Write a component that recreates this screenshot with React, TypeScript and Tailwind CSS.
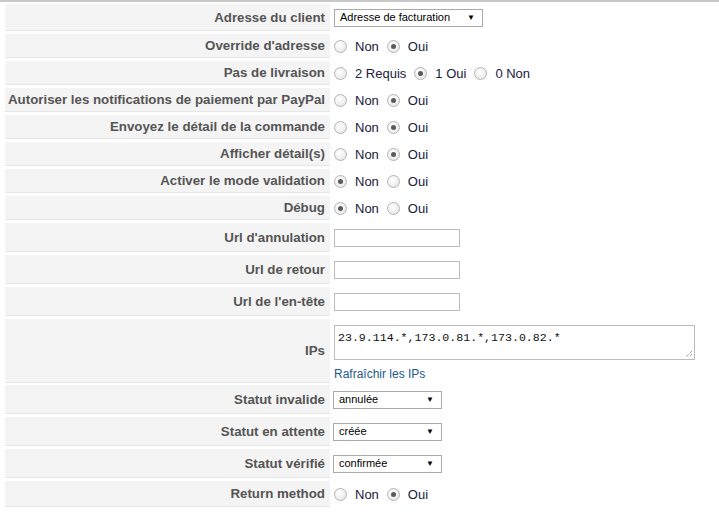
import type { ReactNode } from 'react';

const font = { fontFamily: '"Liberation Sans", Arial, sans-serif' };

function Radio({ checked }: { checked?: boolean }) {
  return (
    <span className="inline-flex h-[13px] w-[13px] shrink-0 items-center justify-center rounded-full border border-[#b4b4b4] bg-[radial-gradient(circle_at_40%_35%,#ffffff,#e2e2e2)]">
      {checked && <span className="h-[5px] w-[5px] rounded-full bg-[#5a5a5a]" />}
    </span>
  );
}

function Radios({ options, value }: { options: string[]; value: number }) {
  return (
    <div className="flex items-center pt-[1px] text-[13px] text-[#20203a]">
      {options.map((o, i) => (
        <span key={o} className="flex items-center pl-[1px] pr-[7px]">
          <Radio checked={i === value} />
          <span className="ml-[8px]">{o}</span>
        </span>
      ))}
    </div>
  );
}

function Select({ value, width }: { value: string; width: string }) {
  return (
    <div
      className={`flex h-[18px] ${width} items-center justify-between border border-[#aaaaaa] bg-white pl-[5px] pr-[7px] text-[11px] text-black`}
    >
      <span>{value}</span>
      <span className="text-[8px]">▼</span>
    </div>
  );
}

function TextInput() {
  return <div className="ml-[1px] h-[18px] w-[126px] border border-[#bdbdbd] bg-white" />;
}

function Row({ label, height, children }: { label: string; height: string; children: ReactNode }) {
  return (
    <div className={`grid grid-cols-[325px_1fr] gap-[3px] ${height}`}>
      <div className="flex items-center justify-end whitespace-nowrap border-b border-[#e6e6e6] bg-[#f4f4f4] pr-[5px] pt-[1px] text-[13.3px] font-bold text-[#555555]">
        {label}
      </div>
      <div className="flex items-center">{children}</div>
    </div>
  );
}

const NO_YES = ['Non', 'Oui'];

export default function App() {
  return (
    <div className="h-[517px] w-[719px] overflow-hidden bg-white" style={font}>
      <div className="h-[2px] bg-[#c8c8c8]" />
      <div className="flex flex-col gap-[3px] pl-[5px] pt-[2px]">
        <Row label="Adresse du client" height="h-[27px]">
          <div className="pl-[1px]">
            <Select value="Adresse de facturation" width="w-[149px]" />
          </div>
        </Row>
        <Row label="Override d'adresse" height="h-[24px]">
          <Radios options={NO_YES} value={1} />
        </Row>
        <Row label="Pas de livraison" height="h-[24px]">
          <Radios options={['2 Requis', '1 Oui', '0 Non']} value={1} />
        </Row>
        <Row label="Autoriser les notifications de paiement par PayPal" height="h-[24px]">
          <Radios options={NO_YES} value={1} />
        </Row>
        <Row label="Envoyez le détail de la commande" height="h-[24px]">
          <Radios options={NO_YES} value={1} />
        </Row>
        <Row label="Afficher détail(s)" height="h-[24px]">
          <Radios options={NO_YES} value={1} />
        </Row>
        <Row label="Activer le mode validation" height="h-[24px]">
          <Radios options={NO_YES} value={0} />
        </Row>
        <Row label="Débug" height="h-[24px]">
          <Radios options={NO_YES} value={0} />
        </Row>
        <Row label="Url d'annulation" height="h-[29px]">
          <TextInput />
        </Row>
        <Row label="Url de retour" height="h-[29px]">
          <TextInput />
        </Row>
        <Row label="Url de l'en-tête" height="h-[29px]">
          <TextInput />
        </Row>
        <Row label="IPs" height="h-[63px]">
          <div className="flex h-full flex-col items-start pl-[1px] pt-[6px]">
            <div className="relative h-[35px] w-[361px] border border-[#bdbdbd] bg-white px-[3px] pt-[5px] text-[11.6px] leading-[14px] text-[#111111] [font-family:'Liberation_Mono',monospace]">
              23.9.114.*,173.0.81.*,173.0.82.*
              <svg className="absolute bottom-[1px] right-[1px]" width="9" height="9" viewBox="0 0 9 9">
                <path d="M8 2 L2 8 M8 5 L5 8" stroke="#777" strokeWidth="1" strokeDasharray="1 1" />
              </svg>
            </div>
            <a className="mt-[5px] text-[12px] text-[#24598a]">Rafraîchir les IPs</a>
          </div>
        </Row>
        <Row label="Statut invalide" height="h-[29px]">
          <Select value="annulée" width="w-[109px]" />
        </Row>
        <Row label="Statut en attente" height="h-[29px]">
          <Select value="créée" width="w-[109px]" />
        </Row>
        <Row label="Statut vérifié" height="h-[29px]">
          <Select value="confirmée" width="w-[109px]" />
        </Row>
        <Row label="Return method" height="h-[26px]">
          <Radios options={NO_YES} value={1} />
        </Row>
      </div>
    </div>
  );
}
